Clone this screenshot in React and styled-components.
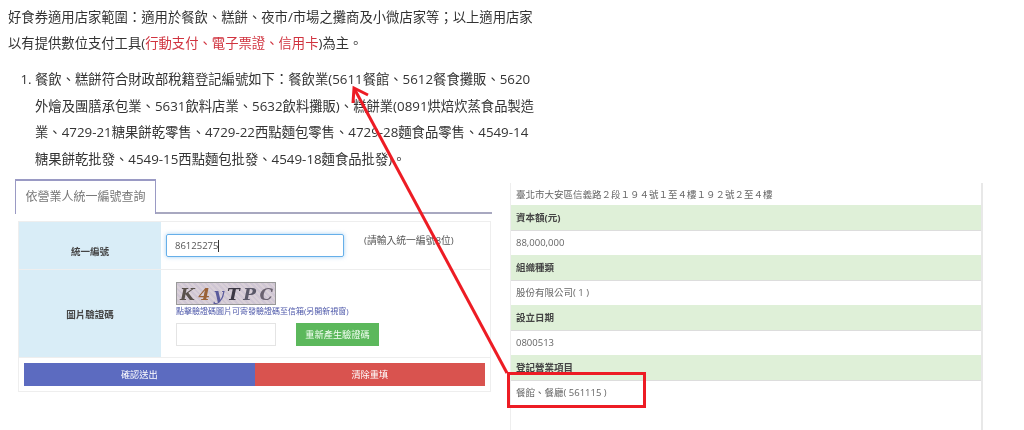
import React from "react";
import styled, { createGlobalStyle } from "styled-components";

const GlobalStyle = createGlobalStyle`
  html, body {
    margin: 0;
    padding: 0;
    background: #fff;
  }
  body {
    width: 1024px;
    height: 430px;
    overflow: hidden;
    font-family: "Open Sans", "Noto Sans CJK TC", sans-serif;
    color: #333;
  }
`;

const address = "臺北市大安區信義路\uFF12段\uFF11\uFF19\uFF14號\uFF11至\uFF14樓\uFF11\uFF19\uFF12號\uFF12至\uFF14樓";

const App = () => {
  return (
    <Page>
      <GlobalStyle />
      <Intro>
        {"好食券適用店家範圍\uFF1A適用於餐飲、糕餅、夜市/市場之攤商及小微店家等\uFF1B以上適用店家"}
        <br />
        以有提供數位支付工具(<Red>行動支付、電子票證、信用卡</Red>)為主。
      </Intro>
      <List>
        <li>
          {"餐飲、糕餅符合財政部稅籍登記編號如下\uFF1A餐飲業(5611餐館、5612餐食攤販、5620"}
          <br />
          外燴及團膳承包業、5631飲料店業、5632飲料攤販)、糕餅業(0891烘焙炊蒸食品製造
          <br />
          業、4729-21糖果餅乾零售、4729-22西點麵包零售、4729-28麵食品零售、4549-14
          <br />
          糖果餅乾批發、4549-15西點麵包批發、4549-18麵食品批發)。
        </li>
      </List>
      <Columns>
        <FormColumn>
          <Tabs>
            <Tab>依營業人統一編號查詢</Tab>
          </Tabs>
          <FormCard>
            <FormRow $height={48}>
              <FieldLabel $shift={10}>統一編號</FieldLabel>
              <FieldBody>
                <TaxInput>
                  86125275<Caret />
                </TaxInput>
                <Hint>(請輸入統一編號8位)</Hint>
              </FieldBody>
            </FormRow>
            <FormRow $height={88}>
              <FieldLabel $shift={0}>圖片驗證碼</FieldLabel>
              <CaptchaBody>
                <Captcha>
                  <CaptchaChar $color="#5a524c">K</CaptchaChar>
                  <CaptchaChar $color="#9a6238">4</CaptchaChar>
                  <CaptchaChar $color="#5a5a9c">y</CaptchaChar>
                  <CaptchaChar $color="#3c3844">T</CaptchaChar>
                  <CaptchaChar $color="#5a5868">P</CaptchaChar>
                  <CaptchaChar $color="#6a6270">C</CaptchaChar>
                </Captcha>
                <CaptchaLink>點擊驗證碼圖片可寄發驗證碼至信箱(另開新視窗)</CaptchaLink>
                <CaptchaActions>
                  <CaptchaInput />
                  <RefreshButton>重新產生驗證碼</RefreshButton>
                </CaptchaActions>
              </CaptchaBody>
            </FormRow>
            <ButtonRow>
              <ActionButton $bg="#5c6bc0">確認送出</ActionButton>
              <ActionButton $bg="#d9534f">清除重填</ActionButton>
            </ButtonRow>
          </FormCard>
        </FormColumn>
        <ResultPanel>
          <ValueRow $height={22}>{address}</ValueRow>
          <TitleRow>資本額(元)</TitleRow>
          <ValueRow>88,000,000</ValueRow>
          <TitleRow>組織種類</TitleRow>
          <ValueRow>股份有限公司( 1 )</ValueRow>
          <TitleRow>設立日期</TitleRow>
          <ValueRow>0800513</ValueRow>
          <TitleRow>登記營業項目</TitleRow>
          <ValueRow>餐館、餐廳( 561115 )</ValueRow>
        </ResultPanel>
      </Columns>
      <Annotation viewBox="0 0 1024 430">
        <rect x="508.5" y="373.5" width="136" height="33" fill="none" stroke="#ed1c24" strokeWidth="3" />
        <path d="M507 373 L355 90" fill="none" stroke="#ed1c24" strokeWidth="3" />
        <path d="M353 103 L354 88 L368 95" fill="none" stroke="#ed1c24" strokeWidth="3" />
      </Annotation>
    </Page>
  );
};

export default App;

const Page = styled.div`
  position: relative;
  width: 1024px;
  height: 430px;
  overflow: hidden;
  filter: blur(0.35px);
`;
const Intro = styled.p`
  margin: 0;
  padding: 4px 0 0 8px;
  white-space: nowrap;
  font-size: 13.33px;
  line-height: 26px;
  color: #333;
`;
const Red = styled.span`
  color: #d0333f;
`;
const List = styled.ol`
  margin: 10px 0 0;
  padding: 0 0 0 35px;
  white-space: nowrap;
  font-size: 13.33px;
  line-height: 26.5px;
  color: #333;
`;
const Columns = styled.div`
  display: flex;
  align-items: flex-start;
  margin-top: 7px;
`;
const FormColumn = styled.div`
  width: 477px;
  margin-left: 15px;
`;
const Tabs = styled.div`
  display: flex;
  height: 33px;
  border-bottom: 2px solid #a8a8c0;
`;
const Tab = styled.div`
  width: 141px;
  height: 35px;
  box-sizing: border-box;
  border: 1px solid #9a9ac4;
  border-top-width: 2px;
  border-bottom: none;
  background: #fff;
  color: #777;
  font-size: 12px;
  line-height: 32px;
  text-align: center;
`;
const FormCard = styled.div`
  margin: 7px 1px 0 3px;
  border: 1px solid #eee;
  box-sizing: border-box;
  height: 171px;
`;
const FormRow = styled.div`
  display: flex;
  height: ${(p) => p.$height}px;
  border-bottom: 1px solid #eee;
  box-sizing: border-box;
`;
const FieldLabel = styled.div`
  display: flex;
  align-items: center;
  justify-content: center;
  flex: 0 0 142px;
  background: #d9edf7;
  color: #444;
  font-size: 9.5px;
  font-weight: 700;
  padding-top: ${(p) => p.$shift}px;
  box-sizing: border-box;
`;
const FieldBody = styled.div`
  display: flex;
  align-items: flex-start;
  padding: 12px 0 0 5px;
`;
const TaxInput = styled.div`
  display: flex;
  align-items: center;
  width: 178px;
  height: 23px;
  box-sizing: border-box;
  padding-left: 8px;
  border: 1px solid #66afe9;
  border-radius: 2px;
  box-shadow: 0 0 4px rgba(102, 175, 233, 0.6);
  font-size: 9.5px;
  color: #555;
`;
const Caret = styled.span`
  width: 1px;
  height: 12px;
  background: #333;
`;
const Hint = styled.span`
  margin: 1px 0 0 20px;
  font-size: 9.8px;
  line-height: 12px;
  color: #555;
`;
const CaptchaBody = styled.div`
  display: flex;
  flex-direction: column;
  align-items: flex-start;
  padding: 12px 0 0 15px;
`;
const Captcha = styled.div`
  display: flex;
  align-items: center;
  justify-content: space-between;
  width: 100px;
  height: 23px;
  box-sizing: border-box;
  padding: 0 2px 0 3px;
  border: 1px solid #999;
  background: repeating-linear-gradient(45deg, #d9d0d8 0 2px, #cfc6d4 2px 4px);
  font-family: "DejaVu Serif", serif;
  font-style: italic;
  font-weight: 700;
  font-size: 17px;
`;
const CaptchaChar = styled.span`
  color: ${(p) => p.$color};
`;
const CaptchaLink = styled.a`
  font-size: 8px;
  line-height: 11px;
  color: #4a55a8;
`;
const CaptchaActions = styled.div`
  display: flex;
  gap: 20px;
  margin-top: 7px;
`;
const CaptchaInput = styled.div`
  width: 100px;
  height: 23px;
  box-sizing: border-box;
  border: 1px solid #e4e4e4;
  background: #fff;
`;
const RefreshButton = styled.div`
  width: 83px;
  height: 23px;
  background: #5cb85c;
  color: #f4fff4;
  font-size: 9.2px;
  line-height: 23px;
  text-align: center;
`;
const ButtonRow = styled.div`
  display: flex;
  padding: 5px;
`;
const ActionButton = styled.div`
  flex: 1;
  height: 23px;
  background: ${(p) => p.$bg};
  color: #fff;
  font-size: 9.2px;
  line-height: 23px;
  text-align: center;
`;
const ResultPanel = styled.div`
  width: 473px;
  height: 260px;
  margin: 4px 0 0 18px;
  box-sizing: border-box;
  border-left: 1px solid #eee;
  border-right: 2px solid #e8e8e8;
  font-size: 9.5px;
  color: #666;
`;
const TitleRow = styled.div`
  height: 26px;
  box-sizing: border-box;
  padding-left: 5px;
  background: #dff0d8;
  border-bottom: 1px solid #ddd;
  color: #444;
  font-weight: 700;
  line-height: 25px;
`;
const ValueRow = styled.div`
  height: ${(p) => p.$height || 24}px;
  box-sizing: border-box;
  padding-left: 5px;
  line-height: 24px;
`;
const Annotation = styled.svg`
  position: absolute;
  top: 0;
  left: 0;
  width: 1024px;
  height: 430px;
  pointer-events: none;
`;
